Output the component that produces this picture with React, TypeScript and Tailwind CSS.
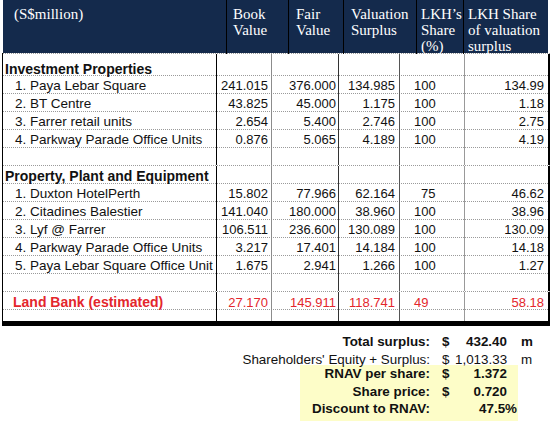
import React from "react";

type Row = {
  label?: string;
  kind: "head" | "item" | "red" | "blank";
  v?: string[];
  shareIndent?: boolean;
};

const rows: Row[] = [
  { kind: "item", label: "1. Paya Lebar Square", v: ["241.015", "376.000", "134.985", "100", "134.99"] },
  { kind: "item", label: "2. BT Centre", v: ["43.825", "45.000", "1.175", "100", "1.18"] },
  { kind: "item", label: "3. Farrer retail units", v: ["2.654", "5.400", "2.746", "100", "2.75"] },
  { kind: "item", label: "4. Parkway Parade Office Units", v: ["0.876", "5.065", "4.189", "100", "4.19"] },
  { kind: "blank" },
  { kind: "head", label: "Property, Plant and Equipment" },
  { kind: "item", label: "1. Duxton HotelPerth", v: ["15.802", "77.966", "62.164", "75", "46.62"], shareIndent: true },
  { kind: "item", label: "2. Citadines Balestier", v: ["141.040", "180.000", "38.960", "100", "38.96"] },
  { kind: "item", label: "3. Lyf @ Farrer", v: ["106.511", "236.600", "130.089", "100", "130.09"] },
  { kind: "item", label: "4. Parkway Parade Office Units", v: ["3.217", "17.401", "14.184", "100", "14.18"] },
  { kind: "item", label: "5. Paya Lebar Square Office Unit", v: ["1.675", "2.941", "1.266", "100", "1.27"] },
  { kind: "blank" },
  { kind: "red", label: "Land Bank (estimated)", v: ["27.170", "145.911", "118.741", "49", "58.18"] },
];

const grid = "grid grid-cols-[214px_55px_67px_61px_65px_85px]";

function Cells({ row, first }: { row: Row; first?: boolean }) {
  const red = row.kind === "red";
  const num = `text-[13px] ${red ? "text-[#e3262c]" : "text-[#111]"}`;
  const v = row.v ?? ["", "", "", "", ""];
  let labelCls = "pl-[12px] text-[13.5px] text-[#111]";
  if (row.kind === "head") labelCls = "pl-[2px] text-[14px] font-bold text-[#111]";
  if (red) labelCls = "pl-[10px] text-[14px] font-bold text-[#e3262c]";
  return (
    <>
      <div className={`flex items-center whitespace-nowrap border-r border-black ${labelCls} ${first ? "pt-[5px]" : ""}`}>
        {row.label}
      </div>
      <div className={`flex items-center justify-end pr-[3px] border-r border-[#8c8c8c] ${num}`}>{v[0]}</div>
      <div className={`flex items-center justify-end pr-[2px] border-r border-[#333] ${num}`}>{v[1]}</div>
      <div className={`flex items-center justify-end pr-[4px] border-r border-[#555] ${num}`}>{v[2]}</div>
      <div className={`flex items-center border-r border-[#999] ${row.shareIndent ? "pl-[21px]" : "pl-[14px]"} ${num}`}>{v[3]}</div>
      <div className={`flex items-center justify-end pr-[4px] border-r-2 border-black ${num}`}>{v[4]}</div>
    </>
  );
}

export default function App() {
  return (
    <div className="w-[552px] h-[436px] bg-white overflow-hidden font-[Liberation_Sans,Arial,sans-serif]">
      {/* header band */}
      <div className="ml-[3px] w-[545px] h-[53px] bg-[#142a4c] flex flex-col font-[Liberation_Serif,Times_New_Roman,serif] text-white text-[15px] leading-[16px]">
        <div className="h-[3px] bg-[#33445f]" />
        <div className="h-[1px] bg-[#c9d0da]" />
        <div className="flex-1 grid grid-cols-[224px_62px_55px_73px_47px_84px] pb-[2px]">
          <div className="border-r border-black pl-[11px] pt-[6px]">(S$million)</div>
          <div className="border-r border-black pl-[6px] pt-[6px]">Book<br />Value</div>
          <div className="border-r border-black pl-[7px] pt-[6px]">Fair<br />Value</div>
          <div className="border-r border-black pl-[7px] pt-[6px]">Valuation<br />Surplus</div>
          <div className="border-r border-black pl-[4px] pt-[6px]">LKH’s<br />Share<br />(%)</div>
          <div className="pl-[4px] pt-[6px] whitespace-nowrap">LKH Share<br />of valuation<br />surplus</div>
        </div>
      </div>

      {/* table body */}
      <div className="ml-[2px] w-[548px] border-l border-black">
        <div className={`${grid} h-[23px] border-t border-b border-dotted border-[#9a9a9a]`}>
          <Cells row={{ kind: "head", label: "Investment Properties" }} first />
        </div>
        {rows.map((r, i) => (
          <div key={i} className={`${grid} h-[18px] border-b border-dotted border-[#9a9a9a]`}>
            <Cells row={r} />
          </div>
        ))}
        <div className={`${grid} h-[11px]`}>
          <Cells row={{ kind: "blank" }} />
        </div>
      </div>
      <div className="ml-[2px] w-[548px] h-[5px] bg-black" />

      {/* summary */}
      <div className="mt-[7px] text-[13.4px] text-[#111] leading-[17.6px]">
        <div className="flex h-[17.6px] font-bold">
          <div className="w-[430px] text-right">Total surplus:</div>
          <div className="w-[25px] pl-[12px]">$</div>
          <div className="w-[52px] text-right">432.40</div>
          <div className="pl-[14px]">m</div>
        </div>
        <div className="flex h-[17.6px]">
          <div className="w-[430px] text-right">Shareholders' Equity + Surplus:</div>
          <div className="w-[25px] pl-[12px]">$</div>
          <div className="w-[52px] text-right">1,013.33</div>
          <div className="pl-[14px]">m</div>
        </div>
        <div className="ml-[300px] w-[218px] bg-[#fdfdc8] pb-[3.5px]">
          <div className="-mt-[3px] font-bold">
            <div className="flex h-[17.6px]">
              <div className="w-[130px] text-right">RNAV per share:</div>
              <div className="w-[25px] pl-[12px]">$</div>
              <div className="w-[52px] text-right">1.372</div>
            </div>
            <div className="flex h-[17.6px]">
              <div className="w-[130px] text-right">Share price:</div>
              <div className="w-[25px] pl-[12px]">$</div>
              <div className="w-[52px] text-right">0.720</div>
            </div>
            <div className="flex h-[17.6px]">
              <div className="w-[130px] text-right">Discount to RNAV:</div>
              <div className="w-[25px]" />
              <div className="w-[62px] text-right">47.5%</div>
            </div>
          </div>
        </div>
      </div>
    </div>
  );
}
